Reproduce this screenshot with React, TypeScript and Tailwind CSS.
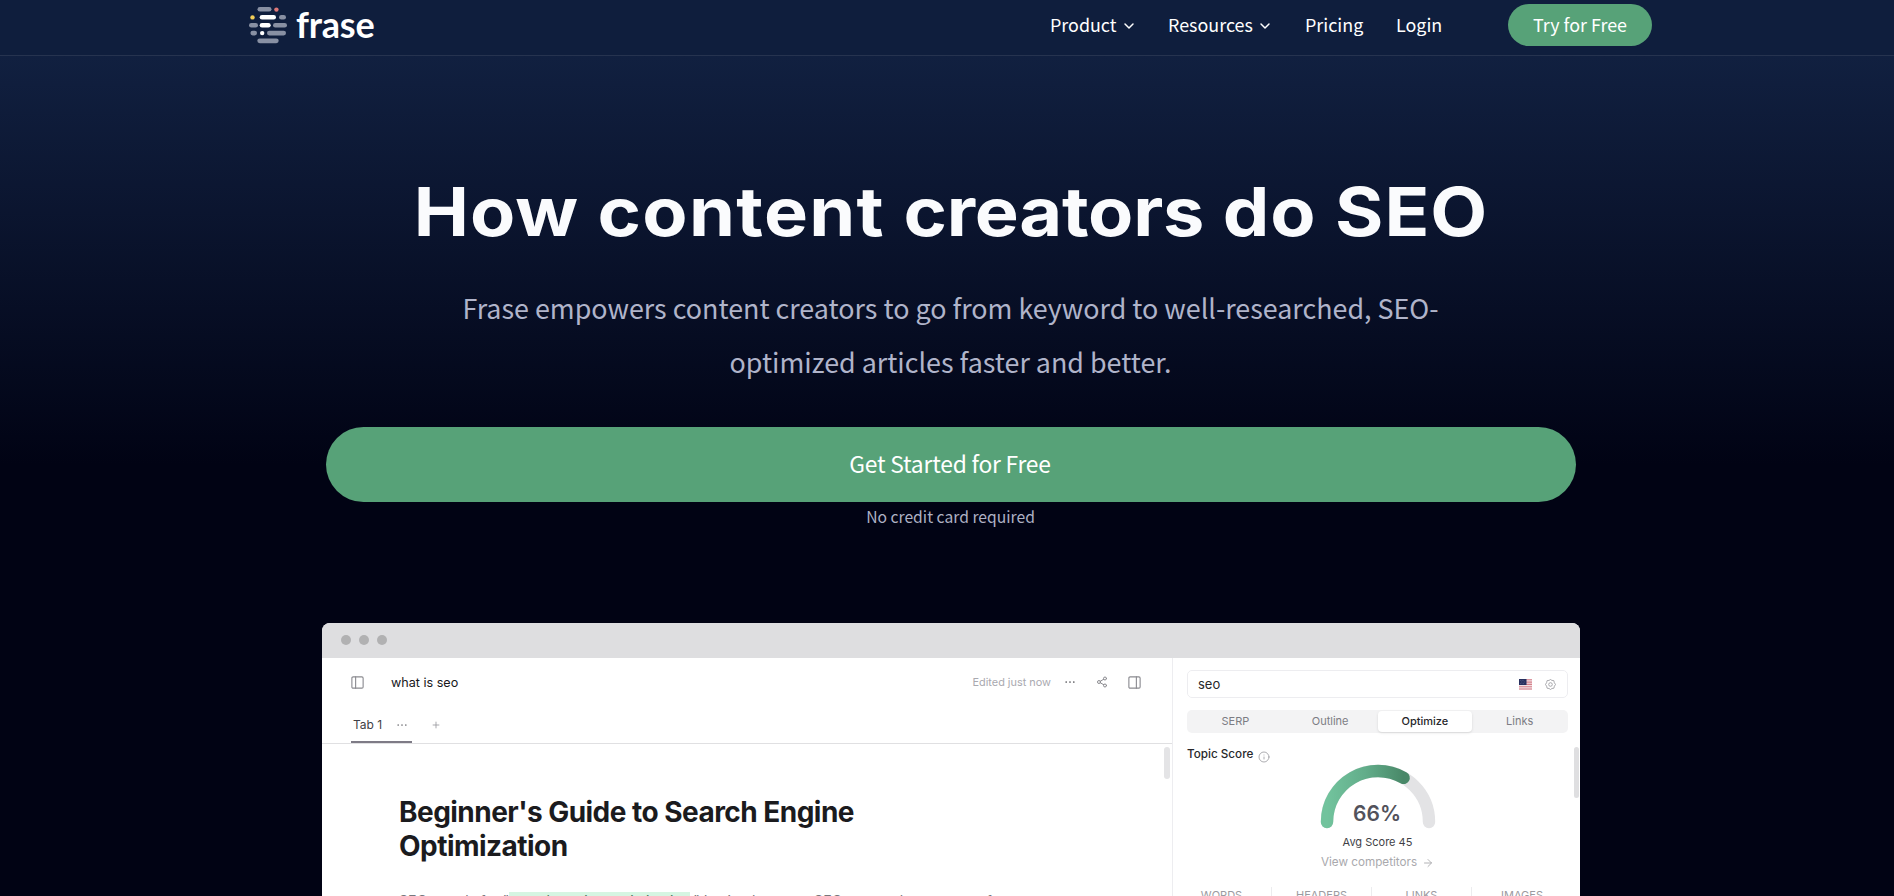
import { ArrowRight, ChevronDown, Info, PanelLeft, PanelRight, Plus, Share2 } from "lucide-react";

const navItems = [
  { label: "Product", menu: true, width: "w-[118px]" },
  { label: "Resources", menu: true, width: "w-[137px]" },
  { label: "Pricing", menu: false, width: "w-[91px]" },
  { label: "Login", menu: false, width: "w-[112px]" },
];

const panelTabs = ["SERP", "Outline", "Optimize", "Links"];
const stats = ["WORDS", "HEADERS", "LINKS", "IMAGES"];

function FraseMark() {
  return (
    <svg width="38" height="37" viewBox="0 0 38 37">
      <g fill="#8890a3">
        <rect x="8.5" y="0" width="14" height="4.6" rx="2.3" />
        <rect x="30" y="8" width="7" height="4.6" rx="2.3" />
        <rect x="0" y="16" width="9" height="4.6" rx="2.3" />
        <rect x="24" y="16" width="14" height="4.6" rx="2.3" />
        <rect x="1.4" y="23.8" width="6.6" height="4.6" rx="2.3" />
        <rect x="18" y="23.8" width="19" height="4.6" rx="2.3" />
        <rect x="8.3" y="31.4" width="21.4" height="4.8" rx="2.4" />
      </g>
      <g fill="#fff">
        <rect x="10.7" y="8" width="16.3" height="4.6" rx="2.3" />
        <rect x="10.7" y="16" width="11" height="4.6" rx="2.3" />
        <circle cx="13.2" cy="26.1" r="2.2" />
      </g>
      <circle cx="27.4" cy="2.6" r="2.2" fill="#dd7878" />
      <circle cx="3.5" cy="10.4" r="2.2" fill="#f3cf58" />
    </svg>
  );
}

function Dots({ className }: { className?: string }) {
  return (
    <svg width="10" height="4" viewBox="0 0 10 4" fill="currentColor" className={className}>
      <circle cx="1.2" cy="2" r="0.85" />
      <circle cx="5" cy="2" r="0.85" />
      <circle cx="8.8" cy="2" r="0.85" />
    </svg>
  );
}

function Flag() {
  return (
    <svg width="13" height="11" viewBox="0 0 13 11">
      <rect width="13" height="11" fill="#f1dfe2" />
      <path d="M0 .8h13M0 3.1h13M0 5.4h13M0 7.7h13M0 10h13" stroke="#d5808a" strokeWidth="1.1" />
      <rect width="7.5" height="6" fill="#27305f" />
      <path d="M1.5 1.5h.7M3.6 1.5h.7M2.5 3h.7M4.8 3h.7M1.5 4.5h.7M3.8 4.5h.7" stroke="#8a90b0" strokeWidth=".6" />
    </svg>
  );
}

function Gear() {
  return (
    <svg width="11" height="11" viewBox="0 0 11 11" fill="none" stroke="#96969b" strokeWidth=".8">
      <path d="M5.5.5 6.9 1.4 8.8 1.6 9.3 3.6 10.5 5.5 9.4 7.2 8.9 9.2 6.9 9.5 5.5 10.5 4.1 9.5 2.1 9.2 1.6 7.2.5 5.5 1.6 3.6 2.1 1.6 4.1 1.4Z" strokeLinejoin="round" />
      <circle cx="5.5" cy="5.5" r="1.8" />
    </svg>
  );
}

function Gauge() {
  return (
    <svg width="116" height="66" viewBox="0 0 116 66" fill="none">
      <defs>
        <linearGradient id="score" x1="0" y1="0" x2="1" y2="0">
          <stop offset="0" stopColor="#72c39d" />
          <stop offset=".5" stopColor="#62ad8a" />
          <stop offset="1" stopColor="#498868" />
        </linearGradient>
      </defs>
      <path d="M7 58a51 51 0 0 1 102 0" stroke="#e3e3e5" strokeWidth="12.4" strokeLinecap="round" />
      <path d="M7 58A51 51 0 0 1 83.6 13.9" stroke="url(#score)" strokeWidth="12.4" strokeLinecap="round" />
      <text x="57" y="57" textAnchor="middle" fill="#52525b" fontSize="21" fontWeight="600">
        66%
      </text>
    </svg>
  );
}

function Header() {
  return (
    <header className="flex h-14 border-b border-[#26334f] bg-[#0f1e3d] pl-[249px]">
      <div className="flex w-[801px] pt-[7px]">
        <FraseMark />
        <span className="-mt-[1px] ml-[9px] font-[Lato] text-[36px] leading-[36px] font-bold tracking-[-0.2px] text-white">
          frase
        </span>
      </div>
      <nav className="flex h-[50px] items-center text-[17.9px] text-white">
        {navItems.map((item) => (
          <a key={item.label} className={`flex items-center gap-[4px] pb-[2px] ${item.width}`}>
            {item.label}
            {item.menu && <ChevronDown size={16} strokeWidth={2.2} className="mt-[5px]" />}
          </a>
        ))}
        <a className="flex h-[42px] w-[144px] items-center justify-center rounded-full bg-[#57a278] pb-[2px]">
          Try for Free
        </a>
      </nav>
    </header>
  );
}

function Editor() {
  return (
    <div className="flex w-[851px] flex-col border-r-[1.5px] border-[#ededf0]">
      <div className="flex h-[48px] shrink-0 items-center pl-[28px] text-[#8b8b90]">
        <PanelLeft size={15} strokeWidth={1.8} />
        <span className="ml-[26px] pt-[2px] text-[12.6px] text-[#18181b]">what is seo</span>
        <span className="ml-auto text-[10.9px] text-[#a9a9af]">Edited just now</span>
        <Dots className="ml-[14px] text-[#55555a]" />
        <Share2 size={12} strokeWidth={2} className="ml-[21px]" />
        <PanelRight size={15} strokeWidth={1.8} className="mr-[30px] ml-[19px]" />
      </div>
      <div className="flex h-[38px] shrink-0 items-end border-b border-[#e0e0e2] pl-[29px]">
        <div className="flex h-[35px] w-[61px] items-center border-b-2 border-[#7e7b86] pt-[1px] pl-[2px] text-[12px] text-[#3f3f46]">
          Tab 1
          <Dots className="ml-[15px] text-[#77777c]" />
        </div>
        <Plus size={10} strokeWidth={2} className="mb-[13px] ml-[19px] text-[#98989d]" />
      </div>
      <div className="flex grow justify-between pt-[3px] pr-[2px] pl-[77px]">
        <div className="pt-[48px]">
          <h2 className="w-[520px] text-[28px] leading-[34px] font-bold tracking-[-0.53px] text-[#1b1b1e]">
            Beginner's Guide to Search Engine Optimization
          </h2>
          <p className="mt-[28px] text-[14.2px] leading-[20px] whitespace-nowrap text-[#77777c]">
            SEO stands for "<mark className="bg-[#d6f5e2] text-[#4c7560]">search engine optimization</mark>." In simple
            terms, SEO means the process of
          </p>
        </div>
        <div className="h-[32px] w-[6px] rounded-full bg-[#e4e4e6]" />
      </div>
    </div>
  );
}

function ScorePanel() {
  return (
    <aside className="flex w-[407px] flex-col pt-[12px] pr-[12px] pl-[14px]">
      <div className="flex h-[28px] shrink-0 items-center rounded-[5px] border border-[#ededf0] pr-[11px] pl-[10px]">
        <span className="pt-[1px] text-[13px] text-[#27272a]">seo</span>
        <span className="ml-auto flex items-center gap-[13px]">
          <Flag />
          <Gear />
        </span>
      </div>
      <div className="mt-[12px] grid h-[23px] shrink-0 grid-cols-4 rounded-[5px] bg-[#f3f3f4] p-[1px] text-[11px] text-[#7c7c83]">
        {panelTabs.map((tab) => (
          <span
            key={tab}
            className={`flex items-center justify-center rounded-[4px] ${
              tab === "Optimize" ? "bg-white font-medium text-[#27272a] shadow-sm" : ""
            }`}
          >
            {tab}
          </span>
        ))}
      </div>
      <div className="flex h-[31px] shrink-0 items-center gap-[5px] pt-[13px] text-[11.7px] font-medium text-[#27272a]">
        Topic Score
        <Info size={12} strokeWidth={1.6} className="mt-[4px] text-[#98989d]" />
      </div>
      <div className="flex flex-col items-center">
        <Gauge />
        <p className="mt-[2px] h-[20px] text-[11px] leading-[20px] text-[#3f3f46]">Avg Score 45</p>
        <p className="flex h-[20px] items-center gap-[5px] pt-[1px] text-[11.7px] text-[#a9a9ad]">
          View competitors
          <ArrowRight size={12} strokeWidth={1.8} />
        </p>
      </div>
      <div className="mt-[15px] -ml-[15px] grid h-[40px] w-[400px] shrink-0 grid-cols-4 divide-x divide-[#ececee] text-center text-[11px] leading-[16px] text-[#9b9ba1]">
        {stats.map((stat) => (
          <span key={stat}>{stat}</span>
        ))}
      </div>
    </aside>
  );
}

function ProductWindow() {
  return (
    <section className="relative mx-auto mt-[84px] w-[1258px] overflow-hidden rounded-t-[8px] bg-white font-[Inter,sans-serif]">
      <div className="flex h-[35px] items-center gap-[8px] bg-[#dedee0] pb-[1px] pl-[19px]">
        <span className="size-[10px] rounded-full bg-[#b1b1b2]" />
        <span className="size-[10px] rounded-full bg-[#b1b1b2]" />
        <span className="size-[10px] rounded-full bg-[#b1b1b2]" />
      </div>
      <div className="flex h-[300px]">
        <Editor />
        <ScorePanel />
      </div>
      {/* scroll thumb over the score panel */}
      <div className="absolute top-[124px] right-[1px] h-[51px] w-[5px] rounded-full bg-[#dfdfe1]" />
    </section>
  );
}

export default function App() {
  return (
    <div className="h-[896px] overflow-hidden bg-[#010314] bg-[linear-gradient(#112040_0px,#112040_56px,#010314_465px)] font-['Noto_Sans_CJK_SC',sans-serif]">
      <Header />
      <main className="pl-[8px]">
        <h1 className="mt-[112px] h-[86px] scale-x-[1.09] text-center font-[Inter] text-[67.8px] leading-[86px] font-bold tracking-[0.9px] text-[#fafbfd]">
          How <span className="tracking-[1.2px]">content</span> <span className="tracking-[-0.2px]">creators</span> do
          SEO
        </h1>
        <p className="mx-auto mt-[27px] w-[1000px] pr-[1px] text-center text-[26.86px] leading-[54px] text-[#b0b4ca]">
          Frase empowers content creators to go from keyword to well-researched, SEO-
          <br />
          optimized articles faster and better.
        </p>
        <button className="mx-auto mt-[38px] flex h-[75px] w-[1250px] items-center justify-center rounded-full bg-[#57a278] pr-[2px] pb-[1px] text-[22.8px] tracking-[-0.2px] text-white">
          Get Started for Free
        </button>
        <p className="h-[37px] pr-[1px] text-center text-[15.7px] leading-[29px] text-[#aeb1c4]">
          No credit card required
        </p>
        <ProductWindow />
      </main>
    </div>
  );
}
